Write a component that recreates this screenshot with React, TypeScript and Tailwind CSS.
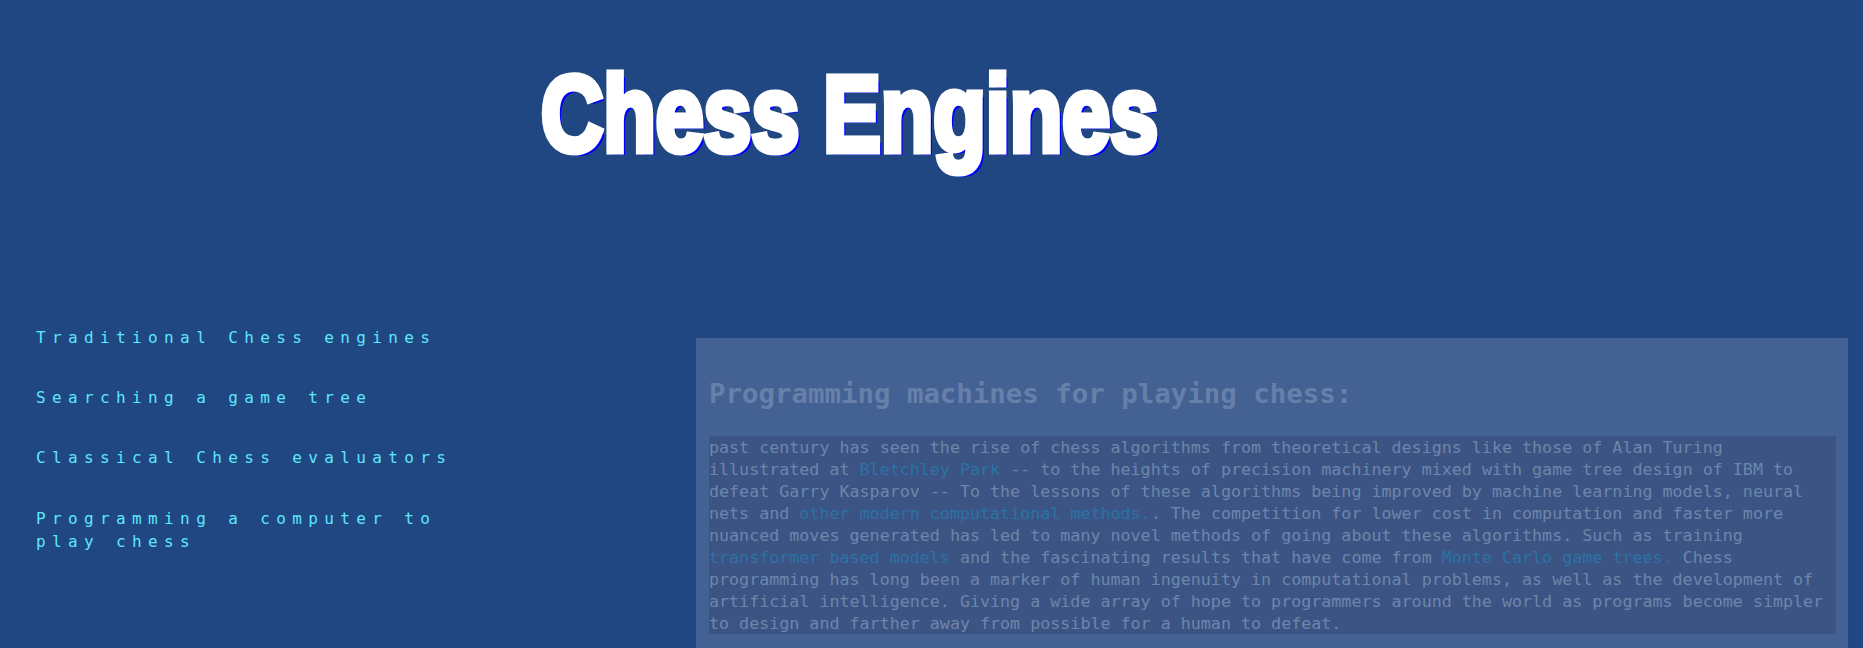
const links = "text-[#2b72a6]";

export default function App() {
  return (
    <main className="h-screen overflow-hidden bg-[#214782] font-['DejaVu_Sans_Mono','Liberation_Mono',monospace]">
      {/* Title */}
      <header className="h-[326px] pl-[541px] pt-[54px]">
        <h1 className="origin-left scale-x-[0.797] whitespace-nowrap font-['Liberation_Sans',sans-serif] text-[108px] leading-[120px] font-bold text-white [-webkit-text-stroke:7px_white] [text-shadow:5px_4px_0_#0000ff]">
          Chess Engines
        </h1>
      </header>

      <div className="flex">
        {/* Side nav */}
        <nav className="w-[696px] shrink-0 pl-[36px]">
          <ul className="flex w-[440px] flex-col gap-[37.2px] text-[16px] leading-[23px] tracking-[6.38px] text-[#5ae8ff]">
            <li>Traditional Chess engines</li>
            <li>Searching a game tree</li>
            <li>Classical Chess evaluators</li>
            <li>Programming a computer to<br />play chess</li>
          </ul>
        </nav>

        {/* Article */}
        <section className="mt-[12px] mr-[15px] flex-1 bg-[#446194] pt-[38px] pr-[12px] pb-[20px] pl-[13px] text-[#6c86ab]">
          <h2 className="mb-[24px] text-[27.4px] leading-[36px] font-bold text-[#6680aa]">
            Programming machines for playing chess:
          </h2>
          <p className="h-[198px] bg-[#3c5484] pt-px text-[16.68px] leading-[22px] whitespace-nowrap">
            past century has seen the rise of chess algorithms from theoretical designs like those of Alan Turing<br />
            illustrated at <a className={links}>Bletchley Park</a> -- to the heights of precision machinery mixed with game tree design of IBM to<br />
            defeat Garry Kasparov -- To the lessons of these algorithms being improved by machine learning models, neural<br />
            nets and <a className={links}>other modern computational methods.</a>. The competition for lower cost in computation and faster more<br />
            nuanced moves generated has led to many novel methods of going about these algorithms. Such as training<br />
            <a className={links}>transformer based models</a> and the fascinating results that have come from <a className={links}>Monte Carlo game trees.</a> Chess<br />
            programming has long been a marker of human ingenuity in computational problems, as well as the development of<br />
            artificial intelligence. Giving a wide array of hope to programmers around the world as programs become simpler<br />
            to design and farther away from possible for a human to defeat.
          </p>
        </section>
      </div>
    </main>
  );
}
